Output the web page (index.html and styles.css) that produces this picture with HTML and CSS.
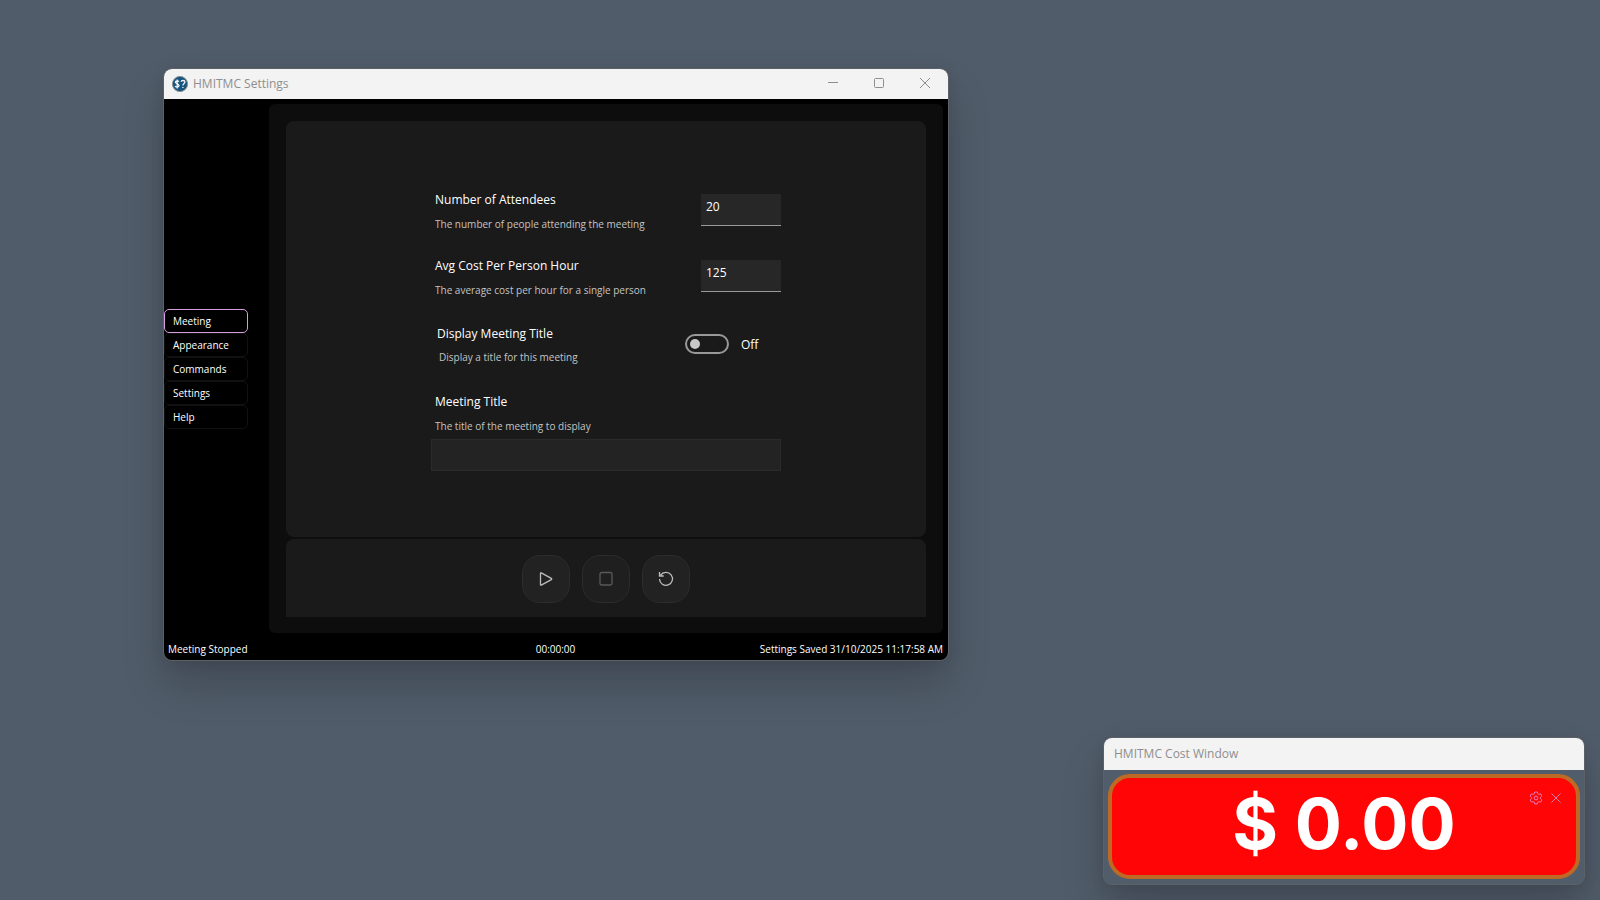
FILE: index.html
```html
<!DOCTYPE html>
<html lang="en">
<head>
<meta charset="utf-8">
<title>HMITMC Settings</title>
<link rel="stylesheet" href="styles.css">
</head>
<body>
<main class="desktop">
  <section class="window settings-window" aria-label="HMITMC Settings">
    <header class="titlebar">
      <svg class="app-icon" viewBox="0 0 16 16" aria-hidden="true">
        <circle cx="8" cy="8" r="7.6" fill="#17577f"/>
        <path d="M6.9 5.6C6.4 4.8 3.4 4.6 3.4 6.2 3.4 7.8 7 7.6 7 9.6 7 11.4 3.8 11.3 3.1 10.2M5.2 3.6v8.8M9.2 5.8C9.3 4 12.9 4.1 12.9 6 12.9 7.5 10.9 7.5 10.9 9.5M10.9 10.9v1.1" fill="none" stroke="#f2f6f8" stroke-width="1.3"/>
      </svg>
      <h1 class="window-title">HMITMC Settings</h1>
      <div class="window-controls">
        <button class="window-button" aria-label="Minimize"><svg viewBox="0 0 12 12"><path d="M1 5.500h10"/></svg></button>
        <button class="window-button" aria-label="Maximize"><svg viewBox="0 0 12 12"><rect x="1.5" y="1.5" width="9" height="9" rx="1"/></svg></button>
        <button class="window-button" aria-label="Close"><svg viewBox="0 0 12 12"><path d="M1 1l10 10M11 1L1 11"/></svg></button>
      </div>
    </header>
    <div class="window-body">
      <nav class="nav" aria-label="Sections">
        <button class="nav-item nav-item-active">Meeting</button>
        <button class="nav-item">Appearance</button>
        <button class="nav-item">Commands</button>
        <button class="nav-item">Settings</button>
        <button class="nav-item">Help</button>
      </nav>
      <div class="content">
        <form class="card form-card">
          <div class="field">
            <label class="field-text" for="attendees">
              <span class="field-label">Number of Attendees</span>
              <span class="field-hint">The number of people attending the meeting</span>
            </label>
            <input class="number-input" id="attendees" type="text" inputmode="numeric" value="20">
          </div>
          <div class="field">
            <label class="field-text" for="cost">
              <span class="field-label">Avg Cost Per Person Hour</span>
              <span class="field-hint">The average cost per hour for a single person</span>
            </label>
            <input class="number-input" id="cost" type="text" inputmode="numeric" value="125">
          </div>
          <div class="field toggle-field">
            <label class="field-text toggle-text" for="show-title">
              <span class="field-label">Display Meeting Title</span>
              <span class="field-hint toggle-hint">Display a title for this meeting</span>
            </label>
            <div class="toggle">
              <input class="switch" id="show-title" type="checkbox" role="switch">
              <span class="toggle-state">Off</span>
            </div>
          </div>
          <div class="title-field">
            <label class="field-text" for="meeting-title">
              <span class="field-label">Meeting Title</span>
              <span class="field-hint">The title of the meeting to display</span>
            </label>
            <input class="title-input" id="meeting-title" type="text">
          </div>
        </form>
        <div class="card transport">
          <button class="round-button" aria-label="Start"><svg viewBox="0 0 16 16"><path d="M2.5 2.4v11.2q0 .9.8.5l10-5.5q.9-.6 0-1.2l-10-5.5q-.8-.4-.8.5z"/></svg></button>
          <button class="round-button" aria-label="Stop" disabled><svg viewBox="0 0 16 16"><rect x="2" y="1.5" width="12" height="12.5" rx="1.8"/></svg></button>
          <button class="round-button" aria-label="Reset"><svg viewBox="0 0 16 16"><path d="M2.6 4.2A6.5 6.5 0 1 1 1.5 8M1.5 1v4h4.2"/></svg></button>
        </div>
      </div>
    </div>
    <footer class="statusbar">
      <span>Meeting Stopped</span>
      <span>00:00:00</span>
      <span class="status-right">Settings Saved 31/10/2025 11:17:58 AM</span>
    </footer>
  </section>

  <section class="window cost-window" aria-label="HMITMC Cost Window">
    <header class="titlebar cost-titlebar"><h2 class="window-title">HMITMC Cost Window</h2></header>
    <div class="cost-body">
      <div class="cost-display">
        <output class="cost-value">$ 0.00</output>
        <div class="cost-actions">
          <button class="cost-button" aria-label="Settings"><svg viewBox="0 0 14 14"><path d="M5.7 1h2.6l.4 1.8 1.1.6 1.8-.6 1.3 2.2L11.5 6.3v1.4l1.4 1.3-1.3 2.2-1.8-.6-1.1.6-.4 1.8H5.7l-.4-1.8-1.1-.6-1.8.6L1.1 9l1.4-1.3V6.3L1.1 5l1.3-2.2 1.8.6 1.1-.6z"/><circle cx="7" cy="7" r="1.9"/></svg></button>
          <button class="cost-button" aria-label="Close"><svg viewBox="0 0 14 14"><path d="M2.5 2.5l9 9M11.5 2.5l-9 9"/></svg></button>
        </div>
      </div>
    </div>
  </section>
</main>
</body>
</html>
```
FILE: styles.css
```css
* {
  box-sizing: border-box;
}

body {
  margin: 0;
  background: #515c6a;
  color: #fff;
  font-family: "Open Sans", "Noto Sans", sans-serif;
  font-size: 12px;
}

button,
input {
  margin: 0;
  color: inherit;
  font: inherit;
}

button {
  padding: 0;
  border: 0;
  background: none;
}

svg {
  display: block;
  fill: none;
  stroke: currentColor;
}

.desktop {
  position: relative;
  min-height: 100vh;
  overflow: hidden;
}

.window {
  position: absolute;
  border-radius: 8px;
  box-shadow: 0 0 0 1px #5c6168, 0 24px 44px rgba(0, 0, 0, 0.2), 0 2px 14px rgba(0, 0, 0, 0.1);
}

.settings-window {
  top: 69px;
  left: 164px;
  width: 49vw;
  overflow: hidden;
  background: #000;
}

.titlebar {
  display: flex;
  align-items: center;
  height: 30px;
  padding-left: 8px;
  background: #f3f3f3;
  color: #8e8e8e;
}

.app-icon {
  width: 16px;
  height: 16px;
  margin-right: 5px;
}

.window-title {
  margin: 0;
  font-size: 12px;
  font-weight: 400;
  line-height: 18px;
}

.window-controls {
  display: flex;
  margin-left: auto;
}

.window-button {
  display: grid;
  place-items: center;
  width: 46px;
  height: 28px;
}

.window-controls {
  align-self: flex-start;
}

.window-button svg {
  width: 12px;
  height: 12px;
}

.window-body {
  display: flex;
  padding: 5px 5px 0 0;
}

.nav {
  display: flex;
  flex: none;
  flex-direction: column;
  justify-content: center;
  width: 105px;
}

.nav-item {
  width: 84px;
  height: 24px;
  padding: 0 8px;
  border: 1px solid #111;
  border-radius: 5px;
  font-size: 10px;
  font-weight: 500;
  text-align: left;
}

.nav-item-active {
  border-color: #d79be0;
}

.content {
  display: flex;
  flex: 1;
  flex-direction: column;
  gap: 2px;
  padding: 17px 17px 16px;
  border-radius: 6px;
  background: #0d0d0d;
}

.card {
  border-radius: 8px;
  background: #1a1a1a;
}

.form-card {
  display: flex;
  flex-direction: column;
  align-items: center;
  padding: 73px 16px 66px;
}

.field,
.title-field {
  width: 100%;
  max-width: 350px;
}

.field {
  display: flex;
  align-items: flex-start;
  justify-content: space-between;
  height: 66px;
}

.field-text {
  display: flex;
  flex-direction: column;
  gap: 8px;
  padding-left: 4px;
}

.field-label {
  font-weight: 500;
  line-height: 16px;
}

.field-hint {
  color: #c4c4c4;
  font-size: 10px;
  line-height: 16px;
}

.field > .field-text {
  margin-top: -2px;
}

.number-input {
  width: 80px;
  height: 32px;
  padding: 0 5px 6px;
  border: 0;
  border-bottom: 1px solid #9a9a9a;
  background: #272727;
  font-weight: 500;
}

.field > .toggle-text {
  gap: 7px;
  margin-top: 0;
  padding-left: 6px;
}

.toggle-hint {
  padding-left: 2px;
}

.toggle {
  display: flex;
  align-items: center;
  gap: 12px;
  width: 96px;
  height: 36px;
}

.switch {
  display: flex;
  align-items: center;
  width: 44px;
  height: 20px;
  padding: 3px;
  border: 2px solid #999;
  border-radius: 10px;
  appearance: none;
}

.switch::before {
  width: 10px;
  height: 10px;
  border-radius: 50%;
  background: #c8c8c8;
  content: "";
}

.switch:checked {
  justify-content: flex-end;
}

.title-field {
  display: flex;
  flex-direction: column;
  gap: 5px;
  padding-top: 2px;
}

.title-input {
  width: 100%;
  height: 32px;
  padding: 0 4px;
  border: 1px solid #2a2a2a;
  background: #232323;
}

.transport {
  display: flex;
  justify-content: center;
  gap: 12px;
  padding: 16px 16px 14px;
  border-radius: 8px 8px 0 0;
}

.round-button {
  display: grid;
  place-items: center;
  width: 48px;
  height: 48px;
  border: 1px solid #2c2c2c;
  border-radius: 18px;
  background: #222;
  color: #bdbdbd;
}

.round-button:disabled {
  background: #1f1f1f;
  color: #5a5a5a;
}

.round-button svg {
  width: 16px;
  height: 16px;
  stroke-width: 1.3;
}

.statusbar {
  display: grid;
  grid-template-columns: 1fr auto 1fr;
  padding: 8px 5px 3px 4px;
  font-size: 10px;
  font-weight: 500;
  line-height: 16px;
}

.status-right {
  text-align: right;
}

.cost-window {
  right: 16px;
  bottom: 16px;
  width: 30vw;
  background: #525d6b;
}

.cost-titlebar {
  height: 32px;
  padding-left: 10px;
  border-radius: 8px 8px 0 0;
}

.cost-body {
  padding: 4px 4px 5px;
}

.cost-display {
  position: relative;
  display: grid;
  justify-content: center;
  height: 105px;
  border: 4px solid #bd6a26;
  border-radius: 22px;
  background: #ff0505;
}

.cost-value {
  font-family: Inter, sans-serif;
  font-size: 70px;
  font-weight: 700;
  line-height: 92px;
}

.cost-actions {
  position: absolute;
  top: 13px;
  right: 13px;
  display: flex;
  gap: 6px;
  color: #e57bb9;
}

.cost-button,
.cost-button svg {
  width: 14px;
  height: 14px;
}
```
